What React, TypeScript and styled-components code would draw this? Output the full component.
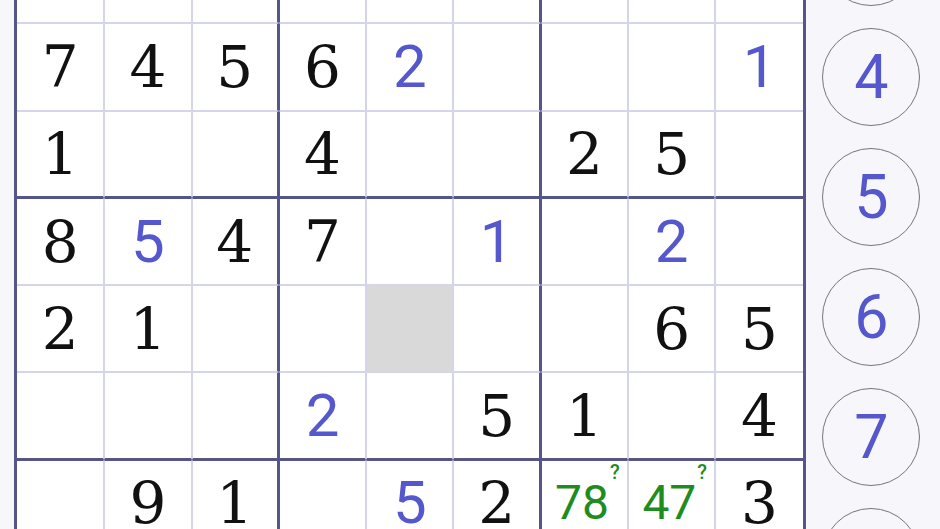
import React from 'react';
import styled, { createGlobalStyle, css } from 'styled-components';

const THIN = '#d4d5eb';
const THICK = '#555587';
const BLUE = '#5557cc';
const GREEN = '#1f8c1f';
const CELL = 87.3;

const GlobalStyle = createGlobalStyle`
  html, body {
    margin: 0;
    padding: 0;
    height: 100%;
    overflow: hidden;
    background: #f7f7fb;
  }
  #root { height: 100%; }
`;

type Kind = 'given' | 'user' | 'note';
type CellData = { v: string; kind: Kind } | null | 'shade';

const g = (v: string): CellData => ({ v, kind: 'given' });
const u = (v: string): CellData => ({ v, kind: 'user' });
const n = (v: string): CellData => ({ v, kind: 'note' });
const _ = null;

const PUZZLE: CellData[][] = [
  [_, _, g('3'), u('1'), _, _, _, g('9'), _],
  [g('7'), g('4'), g('5'), g('6'), u('2'), _, _, _, u('1')],
  [g('1'), _, _, g('4'), _, _, g('2'), g('5'), _],
  [g('8'), u('5'), g('4'), g('7'), _, u('1'), _, u('2'), _],
  [g('2'), g('1'), _, _, 'shade', _, _, g('6'), g('5')],
  [_, _, _, u('2'), _, g('5'), g('1'), _, g('4')],
  [_, g('9'), g('1'), _, u('5'), g('2'), n('78'), n('47'), g('3')],
  [g('5'), _, _, g('9'), _, _, _, g('1'), _],
  [_, g('3'), _, _, g('8'), _, g('5'), _, _],
];

const Screen = styled.div`
  display: flex;
  align-items: flex-start;
  height: 529px;
  overflow: hidden;
  padding-left: 14px;
  font-family: Roboto, 'Noto Sans', sans-serif;
`;

const Board = styled.div`
  flex: none;
  margin-top: -67px;
  display: grid;
  grid-template-columns: repeat(9, ${CELL}px);
  grid-template-rows: repeat(9, ${CELL}px);
  border: 3px solid ${THICK};
  background: #ffffff;
`;

const startEdge = (i: number) =>
  i === 0 ? 'none' : i % 3 === 0 ? `1px solid ${THICK}` : `1px solid ${THIN}`;
const endEdge = (i: number) =>
  i === 8 ? 'none' : i % 3 === 2 ? `2px solid ${THICK}` : `1px solid ${THIN}`;

const Cell = styled.div<{ $row: number; $col: number; $shaded?: boolean }>`
  box-sizing: border-box;
  display: flex;
  align-items: center;
  justify-content: center;
  overflow: hidden;
  background: ${(p) => (p.$shaded ? '#d9d9d9' : '#ffffff')};
  border-left: ${(p) => startEdge(p.$col)};
  border-right: ${(p) => endEdge(p.$col)};
  border-top: ${(p) => startEdge(p.$row)};
  border-bottom: ${(p) => endEdge(p.$row)};
`;

const Digit = styled.span<{ $kind: 'given' | 'user' }>`
  line-height: 1;
  ${(p) =>
    p.$kind === 'given'
      ? css`
          font-family: 'DejaVu Serif', 'Liberation Serif', serif;
          font-size: 58px;
          color: #111111;
        `
      : css`
          font-family: Roboto, 'Noto Sans', sans-serif;
          font-size: 60px;
          color: ${BLUE};
        `}
`;

const NoteGroup = styled.div`
  display: flex;
  align-items: flex-start;
  padding-left: 6px;
  color: ${GREEN};
  font-family: Roboto, 'Noto Sans', sans-serif;
`;

const NoteDigits = styled.span`
  font-size: 48px;
  line-height: 1;
`;

const NoteMark = styled.span`
  font-size: 20px;
  font-weight: 500;
  line-height: 1;
  margin-top: -17px;
  margin-left: 1px;
`;

const Panel = styled.div`
  flex: 1;
  display: flex;
  flex-direction: column;
  align-items: center;
  gap: 22px;
  margin-top: -332px;
  padding-right: 3px;
`;

const NumButton = styled.button`
  flex: none;
  box-sizing: border-box;
  width: 98px;
  height: 98px;
  padding: 0;
  border-radius: 50%;
  border: 1.5px solid #767676;
  background: transparent;
  display: flex;
  align-items: center;
  justify-content: center;
  font-family: Roboto, 'Noto Sans', sans-serif;
  font-size: 61px;
  line-height: 1;
  color: ${BLUE};
  cursor: pointer;
`;

const renderContent = (c: CellData) => {
  if (!c || c === 'shade') return null;
  if (c.kind === 'note') {
    return (
      <NoteGroup>
        <NoteDigits>{c.v}</NoteDigits>
        <NoteMark>?</NoteMark>
      </NoteGroup>
    );
  }
  return <Digit $kind={c.kind}>{c.v}</Digit>;
};

export default function App() {
  return (
    <>
      <GlobalStyle />
      <Screen>
        <Board>
          {PUZZLE.map((row, r) =>
            row.map((c, col) => (
              <Cell key={`${r}-${col}`} $row={r} $col={col} $shaded={c === 'shade'}>
                {renderContent(c)}
              </Cell>
            ))
          )}
        </Board>
        <Panel>
          {[1, 2, 3, 4, 5, 6, 7, 8, 9].map((d) => (
            <NumButton key={d}>{d}</NumButton>
          ))}
        </Panel>
      </Screen>
    </>
  );
}
